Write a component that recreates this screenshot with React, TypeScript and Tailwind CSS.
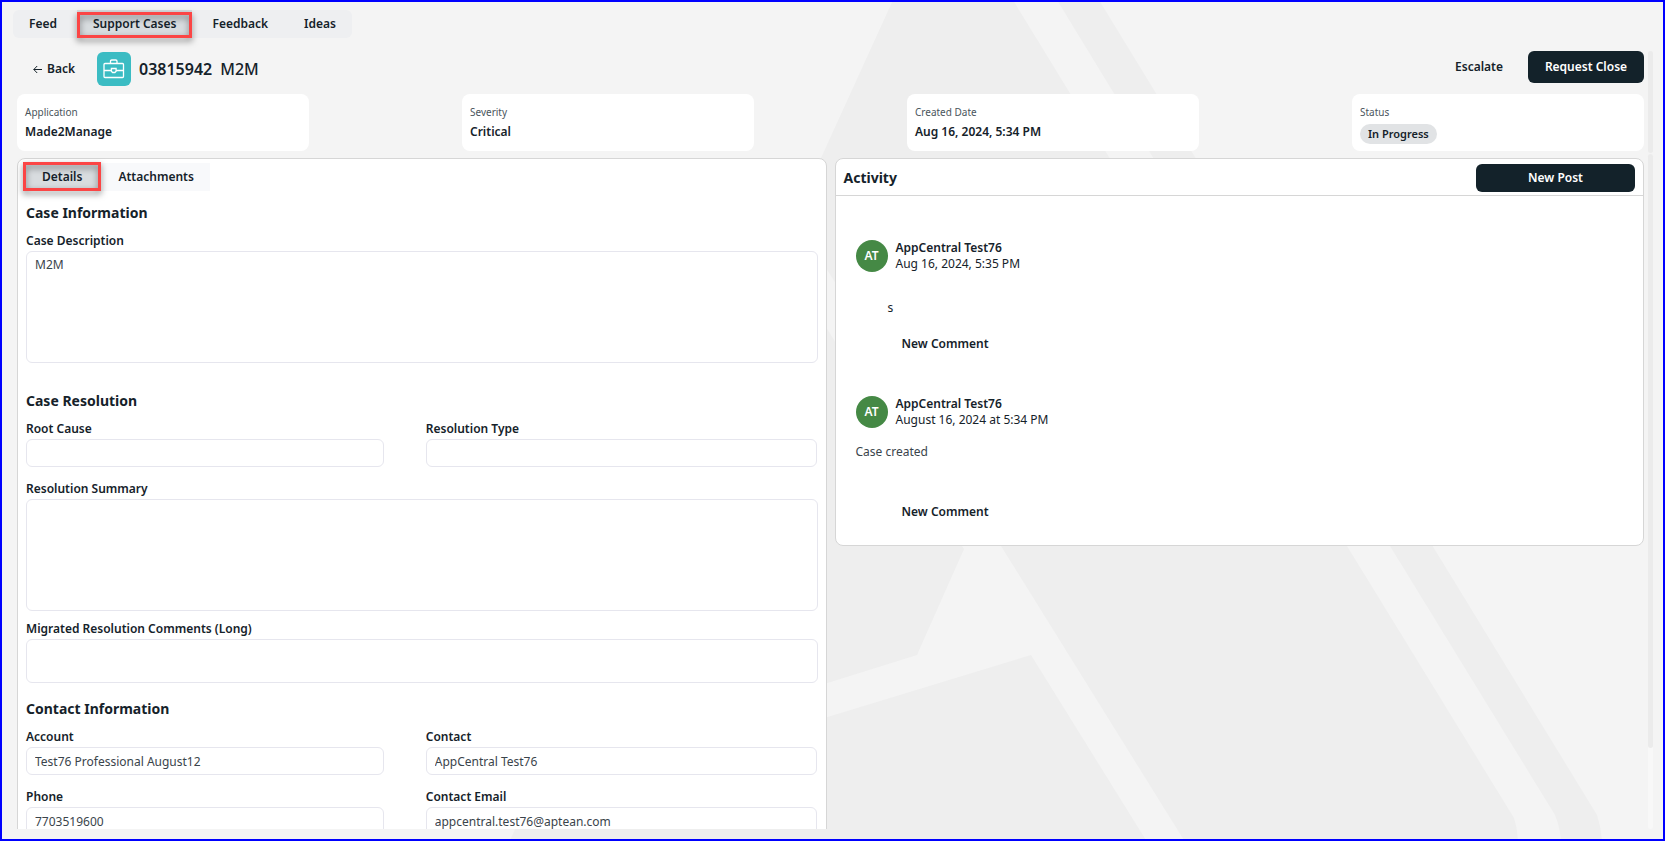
import { useId, type ReactNode } from 'react';

function Backdrop() {
  return (
    <svg
      className="pointer-events-none absolute inset-0 h-full w-full"
      viewBox="0 0 1661 837"
      preserveAspectRatio="xMidYMid slice"
      aria-hidden="true"
    >
      <g transform="translate(-2 -2)">
        <path
          fill="#eeeeee"
          d="M893 0 L512 836 Q510 840 509 845 L1602 845 Q1602 830 1597 815 L1099 0 Z"
        />
        <path
          fill="#f4f4f4"
          d="M1013 0 L1347 546 L1514 818 Q1518 830 1518 845 L1561 845 Q1561 830 1555 815 L1390 546 L1057 0 Z"
        />
        <path
          fill="#f4f4f4"
          d="M821 260 L1001 546 L1187 845 L1149 845 L1031 655 L821 719 L821 685 L917 655 L964 549 L821 319 Z"
        />
      </g>
    </svg>
  );
}

function Tab({ label, highlight }: { label: string; highlight?: string }) {
  return (
    <button
      type="button"
      role="tab"
      aria-selected={!!highlight}
      className={`relative h-7 px-4 text-xs leading-5 font-semibold ${highlight ? 'bg-[#d8dcdf]' : ''}`}
    >
      {label}
      {highlight && (
        <span
          className={`pointer-events-none absolute border-3 border-[#fb4545] drop-shadow-[0_3px_3px_rgba(0,0,0,0.5)] ${highlight}`}
        />
      )}
    </button>
  );
}

function SummaryCard({ label, children }: { label: string; children: ReactNode }) {
  return (
    <div className="h-[57px] w-[292px] rounded-lg bg-white px-2 py-2.5">
      <div className="text-[10px] leading-4 text-[#4a555c]">{label}</div>
      {children}
    </div>
  );
}

function CardValue({ children }: { children: ReactNode }) {
  return <div className="mt-0.5 text-xs leading-5 font-semibold">{children}</div>;
}

const fieldBox =
  'block w-full rounded-md border border-[#e6e6ee] bg-white px-2 text-xs text-[#3a444b] outline-none';

const fieldLabel = 'block text-xs leading-5 font-semibold';

function Field({ label, value = '' }: { label: string; value?: string }) {
  const id = useId();
  return (
    <div>
      <label htmlFor={id} className={fieldLabel}>
        {label}
      </label>
      <input id={id} readOnly value={value} className={`${fieldBox} h-7`} />
    </div>
  );
}

function AreaField({ label, value = '', height }: { label: string; value?: string; height: string }) {
  const id = useId();
  return (
    <div>
      <label htmlFor={id} className={fieldLabel}>
        {label}
      </label>
      <textarea id={id} readOnly value={value} className={`${fieldBox} ${height} resize-none py-[5px] leading-4`} />
    </div>
  );
}

function SectionTitle({ children }: { children: ReactNode }) {
  return <h2 className="mb-2 text-sm leading-5 font-bold">{children}</h2>;
}

function Post({ date, children }: { date: string; children: ReactNode }) {
  return (
    <article>
      <div className="flex gap-2">
        <div className="flex size-8 items-center justify-center rounded-full bg-[#458945] text-xs font-semibold text-white">
          AT
        </div>
        <div className="text-xs leading-4">
          <div className="font-semibold">AppCentral Test76</div>
          <div>{date}</div>
        </div>
      </div>
      {children}
      <button type="button" className="ml-[46px] block text-xs leading-5 font-semibold">
        New Comment
      </button>
    </article>
  );
}

export default function App() {
  return (
    <div className="relative flex h-screen flex-col overflow-hidden border-2 border-[#0000ff] bg-[#f4f4f4] pt-2 pr-2.5 pb-2.5 pl-[11px] font-['Noto_Sans',sans-serif] text-[#15222a]">
      <Backdrop />
      <nav role="tablist" className="relative z-10 flex h-7 w-fit shrink-0 gap-1 rounded-md bg-[#eeeff1]">
        <Tab label="Feed" />
        <Tab label="Support Cases" highlight="inset-x-0 top-0.5 bottom-0" />
        <Tab label="Feedback" />
        <Tab label="Ideas" />
      </nav>

      <div className="relative mt-[13px] flex min-h-0 flex-1 gap-1 pl-1">
        <main className="flex min-w-0 flex-1 flex-col">
          <header className="flex h-[35px] shrink-0 justify-between">
            <div className="flex h-[34px] items-center self-end">
              <button type="button" className="flex items-center gap-[5px] pl-4 text-xs font-semibold">
                <svg width="9" height="9" viewBox="0 0 9 9" fill="none" stroke="currentColor" aria-hidden="true">
                  <path d="M9 4.5H0.8M4.2 1L0.8 4.5L4.2 8" />
                </svg>
                Back
              </button>
              <div className="ml-[22px] flex size-[34px] items-center justify-center rounded-md bg-[#3bbcc3]">
                <svg
                  width="22"
                  height="22"
                  viewBox="0 0 22 22"
                  fill="none"
                  stroke="white"
                  strokeWidth="1.3"
                  aria-hidden="true"
                >
                  <rect x="1" y="5.5" width="19.5" height="14" rx="1" />
                  <path d="M7.5 5.5V3.2Q7.5 2 8.7 2H12.8Q14 2 14 3.2V5.5" />
                  <path d="M1 12.5H8.4M13.1 12.5H20.5" />
                  <path d="M8.4 10.5H13.1V13.2L11.9 14.5H9.6L8.4 13.2Z" />
                </svg>
              </div>
              <h1 className="ml-2 flex gap-2 text-base font-semibold">
                03815942 <span className="font-medium">M2M</span>
              </h1>
            </div>
            <div className="flex h-8 items-center gap-[25px] text-xs">
              <button type="button" className="font-semibold">
                Escalate
              </button>
              <button type="button" className="h-8 w-[116px] rounded-md bg-[#13222a] font-semibold text-white">
                Request Close
              </button>
            </div>
          </header>

          <div className="mt-2 flex shrink-0 justify-between">
            <SummaryCard label="Application">
              <CardValue>Made2Manage</CardValue>
            </SummaryCard>
            <SummaryCard label="Severity">
              <CardValue>Critical</CardValue>
            </SummaryCard>
            <SummaryCard label="Created Date">
              <CardValue>Aug 16, 2024, 5:34 PM</CardValue>
            </SummaryCard>
            <SummaryCard label="Status">
              <div className="mt-1 w-fit rounded-full bg-[#e1e3e5] px-2 text-[11px] leading-5 font-semibold">
                In Progress
              </div>
            </SummaryCard>
          </div>

          <div className="mt-[7px] grid min-h-0 flex-1 grid-cols-2 items-start gap-2 overflow-hidden">
            <section className="rounded-lg border border-[#d6d6d6] bg-white px-2 pt-1 pb-6">
              <div role="tablist" className="flex w-fit gap-1 bg-[#f8f9fb]">
                <Tab label="Details" highlight="-inset-x-[3px] -top-px bottom-0" />
                <Tab label="Attachments" />
              </div>

              <div className="mt-3">
                <SectionTitle>Case Information</SectionTitle>
                <AreaField label="Case Description" value="M2M" height="h-28" />
              </div>

              <div className="mt-7">
                <SectionTitle>Case Resolution</SectionTitle>
                <div className="grid grid-cols-[358fr_392fr] gap-x-[42px]">
                  <Field label="Root Cause" />
                  <Field label="Resolution Type" />
                </div>
                <div className="mt-3 flex flex-col gap-2">
                  <AreaField label="Resolution Summary" height="h-28" />
                  <AreaField label="Migrated Resolution Comments (Long)" height="h-11" />
                </div>
              </div>

              <div className="mt-4">
                <SectionTitle>Contact Information</SectionTitle>
                <div className="grid grid-cols-[358fr_392fr] gap-x-[42px] gap-y-3">
                  <Field label="Account" value="Test76 Professional August12" />
                  <Field label="Contact" value="AppCentral Test76" />
                  <Field label="Phone" value="7703519600" />
                  <Field label="Contact Email" value="appcentral.test76@aptean.com" />
                </div>
              </div>
            </section>

            <section className="rounded-lg border border-[#d6d6d6] bg-white">
              <div className="flex h-[37px] items-center justify-between border-b border-[#d6d6d6] px-2 pt-0.5">
                <h2 className="text-sm font-bold">Activity</h2>
                <button
                  type="button"
                  className="h-7 w-[159px] rounded-md bg-[#13222a] text-xs font-semibold text-white"
                >
                  New Post
                </button>
              </div>
              <div className="flex flex-col gap-[42px] px-5 pt-11 pb-[23px]">
                <Post date="Aug 16, 2024, 5:35 PM">
                  <p className="mt-[26px] mb-4 pl-8 text-xs leading-5">s</p>
                </Post>
                <Post date="August 16, 2024 at 5:34 PM">
                  <p className="mt-3.5 mb-10 text-xs leading-5 text-[#3a444b]">Case created</p>
                </Post>
              </div>
            </section>
          </div>
        </main>

        <div className="flex w-[5px] flex-col gap-px" aria-hidden="true">
          <div className="h-[102px] rounded-full bg-[#ebebeb]" />
          <div className="flex-1 rounded-full bg-[#f8f8f8]">
            <div className="h-[88%] rounded-full bg-[#ebebeb]" />
          </div>
        </div>
      </div>
    </div>
  );
}
